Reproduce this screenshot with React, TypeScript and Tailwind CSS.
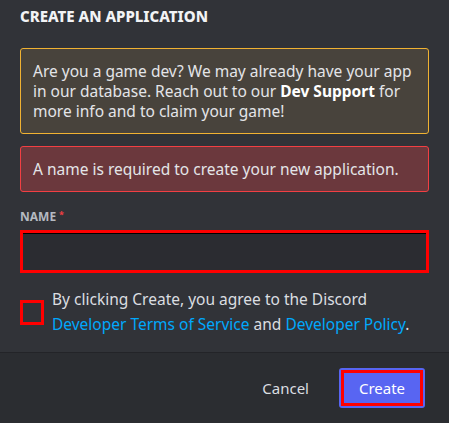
import React, { useState } from 'react';

const App: React.FC = () => {
    const [name, setName] = useState('');
    const [agreed, setAgreed] = useState(false);

    return (
        <div
            className="w-[449px] h-[423px] flex flex-col bg-[#313338] text-[#dbdee1] overflow-hidden"
            style={{ fontFamily: '"Noto Sans", "Open Sans", sans-serif' }}
        >
            <div className="flex-1 px-5 pt-[6px]">
                <h1 className="text-[15px] leading-5 font-extrabold text-[#f2f3f5]">
                    CREATE AN APPLICATION
                </h1>

                {/* game dev notice */}
                <div className="mt-[22px] rounded-[3px] border border-[#f0b232] bg-[#48433c] px-3 py-3 text-[15.5px] leading-5 text-[#e4e5e8]">
                    Are you a game dev? We may already have your app in our database. Reach out to our{' '}
                    <span className="font-bold text-white">Dev Support</span> for more info and to claim your game!
                </div>

                {/* error */}
                <div className="mt-3 rounded-[3px] border border-[#f23f43] bg-[#6b383d] px-3 py-3 text-[15.5px] leading-5 text-[#e4e5e8]">
                    A name is required to create your new application.
                </div>

                <div className="mt-[17px] flex items-start gap-[3px] text-[12px] leading-4 font-bold text-[#b5bac1]">
                    NAME
                    <span className="text-[#f23f43] text-[9px] leading-3">*</span>
                </div>
                <div className="mt-[5px] h-[43px] border-[3px] border-[#ff0000] bg-[#2b2c31]">
                    <input
                        value={name}
                        onChange={(e) => setName(e.target.value)}
                        className="w-full h-full bg-transparent border-t border-black outline-none px-2 text-[15px] text-[#dbdee1]"
                    />
                </div>

                <div className="mt-[14px] flex items-start gap-2">
                    <button
                        onClick={() => setAgreed(!agreed)}
                        className={`mt-[13px] w-6 h-[25px] shrink-0 border-[3px] border-[#ff0000] ${agreed ? 'bg-[#5865f2]' : 'bg-transparent'}`}
                    />
                    <p className="text-[15.5px] leading-[25px] text-[#dbdee1]">
                        By clicking Create, you agree to the Discord{' '}
                        <a className="text-[#00a8fc]">Developer Terms of Service</a> and{' '}
                        <a className="text-[#00a8fc]">Developer Policy</a>.
                    </p>
                </div>
            </div>

            <div className="h-[71px] border-t border-[#232428] bg-[#2b2d31] flex items-center justify-end pr-6 gap-[30px]">
                <button className="text-[15px] text-[#dbdee1]">Cancel</button>
                <button className="w-[86px] h-[40px] rounded-[3px] bg-[#5865f2] p-[2px]">
                    <span className="flex w-full h-full items-center justify-center border-[3px] border-[#ff0000] text-[15px] text-white">
                        Create
                    </span>
                </button>
            </div>
        </div>
    );
};

export default App;
